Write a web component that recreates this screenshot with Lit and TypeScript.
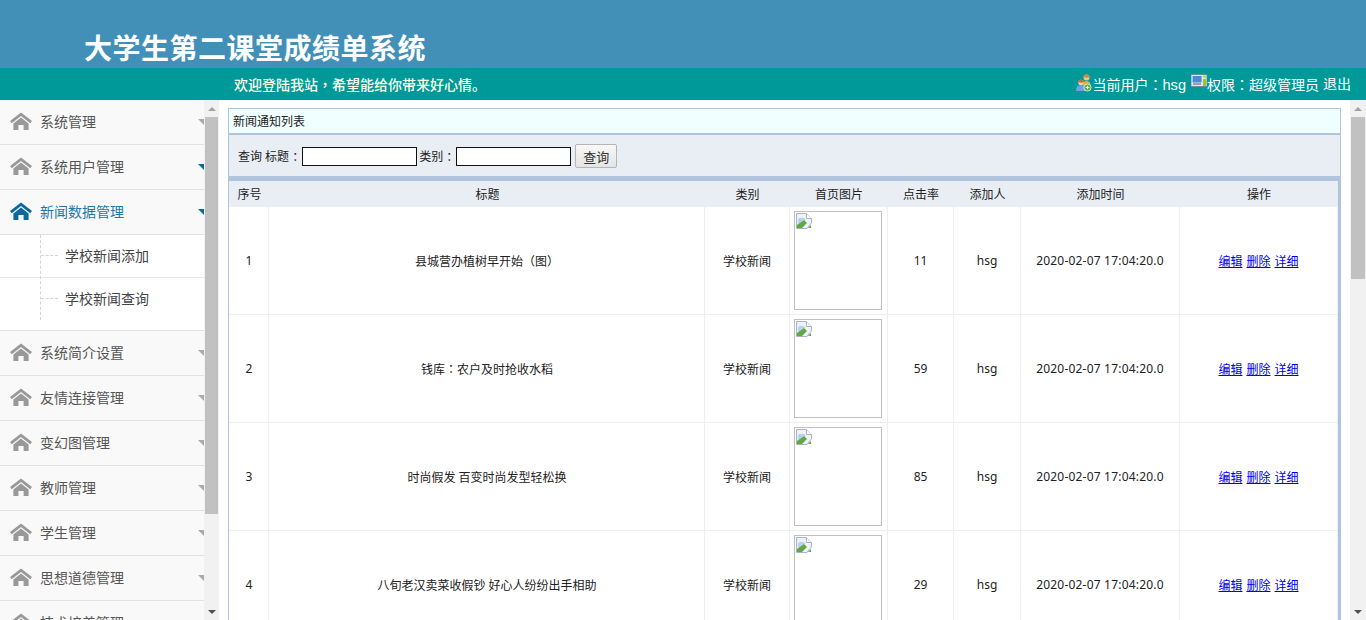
import { LitElement, html, css, svg } from "lit";
import { customElement } from "lit/decorators.js";

const home = svg`<path d="M11 0.5 L22 9 L20.2 11.2 L11 4 L1.8 11.2 L0 9 Z" fill="currentColor"/><path d="M11 5.6 L18.6 11.4 V18 H13.6 V13 H8.4 V18 H3.4 V11.4 Z" fill="currentColor"/>`;

const MENU: { label: string; blue?: boolean; active?: boolean }[] = [
  { label: "系统管理" },
  { label: "系统用户管理", blue: true },
  { label: "新闻数据管理", blue: true, active: true },
  { label: "系统简介设置" },
  { label: "友情连接管理" },
  { label: "变幻图管理" },
  { label: "教师管理" },
  { label: "学生管理" },
  { label: "思想道德管理" },
  { label: "技术培养管理" },
];

const ROWS = [
  ["1", html`县城营办植树早开始（图）`, "11"],
  ["2", html`钱库<span class="tc">：</span>农户及时抢收水稻`, "59"],
  ["3", html`时尚假发 百变时尚发型轻松换`, "85"],
  ["4", html`八旬老汉卖菜收假钞 好心人纷纷出手相助`, "29"],
];

@customElement("app-root")
export class AppRoot extends LitElement {
  static styles = css`
    :host {
      display: block;
      width: 1366px;
      height: 620px;
      overflow: hidden;
      background: #fff;
      font-family: "Noto Sans", "Noto Sans CJK SC", sans-serif;
      font-size: 12px;
      color: #222;
    }
    .top {
      height: 68px;
      background: #428fb8;
      box-sizing: border-box;
      padding: 28px 0 0 84px;
    }
    .brand {
      font-size: 28px;
      line-height: 40px;
      font-weight: 700;
      letter-spacing: 0.5px;
      color: #fff;
    }
    .sub {
      height: 32px;
      background: #009999;
      display: flex;
      align-items: center;
      justify-content: space-between;
      padding: 0 15px 0 234px;
      color: #fff;
      font-size: 14px;
      line-height: 32px;
    }
    .welcome {
      color: #fdfde8;
      font-weight: 500;
      white-space: nowrap;
    }
    .user {
      display: flex;
      align-items: center;
      white-space: nowrap;
    }
    .user svg {
      display: block;
      flex: none;
    }
    .ic1 { margin-top: -2px; }
    .ic2 { margin: -6px 0 0 2px; }
    .tc { font-family: "Noto Sans CJK TC", sans-serif; }
    .latin { font-family: "Liberation Sans", sans-serif; font-size: 14.6px; margin-right: 3px; }
    .gap { margin-left: 4px; }
    .body {
      display: flex;
      height: 520px;
    }
    .side {
      width: 204px;
      flex: none;
      overflow: hidden;
      background: #fff;
    }
    .item {
      height: 45px;
      box-sizing: border-box;
      border-bottom: 1px solid #e2e2e2;
      background: #f9f9f9;
      display: flex;
      align-items: center;
      padding: 0 0 2px 10px;
      font-size: 14px;
      color: #555;
      position: relative;
    }
    .item svg.h {
      color: #999;
      margin-right: 8px;
      flex: none;
    }
    .item.active { color: #1f76a8; }
    .item.active svg.h { color: #0a6a9e; }
    .tri {
      position: absolute;
      right: 0;
      top: 19px;
      width: 0;
      height: 0;
      border-left: 6px solid transparent;
      border-top: 6px solid #aaa;
    }
    .tri.blue { border-top-color: #0c6a9c; }
    .subs {
      position: relative;
      background: #fff;
    }
    .subs::before {
      content: "";
      position: absolute;
      left: 40px;
      top: 0;
      height: 85px;
      border-left: 1px dashed #d4d4d4;
    }
    .subitem {
      height: 43px;
      box-sizing: border-box;
      display: flex;
      align-items: center;
      font-size: 14px;
      color: #444;
      padding: 0 0 2px 41px;
      border-bottom: 1px solid #e8e8e8;
    }
    .subitem.last { height: 53px; padding-bottom: 12px; border-bottom: 1px solid #e2e2e2; }
    .subitem i {
      display: block;
      width: 17px;
      border-top: 1px dashed #d4d4d4;
      margin-right: 7px;
    }
    .bar {
      flex: none;
      background: #f1f1f1;
      display: flex;
      flex-direction: column;
      align-items: stretch;
    }
    .bar.left { width: 15px; }
    .bar.right { width: 16px; }
    .btn {
      height: 17px;
      flex: none;
      display: flex;
      align-items: center;
      justify-content: center;
    }
    .up { width: 0; height: 0; border: 4px solid transparent; border-top: 0; border-bottom: 4px solid #a3a3a3; }
    .dn { width: 0; height: 0; border: 4px solid transparent; border-bottom: 0; border-top: 4px solid #505050; }
    .thumb { background: #c1c1c1; margin: 0 1px; flex: none; }
    .space { flex: 1; }
    .main {
      flex: 1;
      min-width: 0;
      overflow: hidden;
      padding: 8px 9px 0 9px;
    }
    .panel {
      width: 1113px;
      box-sizing: border-box;
      border: 1px solid #b0c4de;
      border-bottom: 0;
    }
    .cap {
      height: 24px;
      line-height: 26px;
      box-sizing: border-box;
      background: #f0ffff;
      padding-left: 4px;
      color: #222;
      overflow: hidden;
    }
    .search {
      border-top: 2px solid #b0c4de;
      border-bottom: 5px solid #b0c4de;
      height: 40px;
      padding: 1px 0 0 9px;
      background: #e9eef5;
      display: flex;
      align-items: center;
      white-space: nowrap;
    }
    .search input {
      width: 115px;
      height: 19px;
      box-sizing: border-box;
      border: 1px solid #111;
      background: #fff;
      padding: 0;
      margin: 0 2px 0 1px;
    }
    .search button {
      width: 42px;
      height: 24px;
      margin-left: 2px;
      border: 1px solid #b5b5b5;
      border-radius: 2px;
      background: linear-gradient(#f8f8f8, #e4e4e4);
      font: inherit;
      font-size: 13px;
      color: #333;
      padding: 0;
    }
    .tablewrap {
      border-right: 2px solid #b0c4de;
    }
    table {
      width: 1109px;
      border-collapse: separate;
      border-spacing: 0;
      table-layout: fixed;
    }
    th {
      height: 26px;
      padding: 0;
      box-sizing: border-box;
      background: #e9eef5;
      font-weight: 400;
      text-align: center;
    }
    td {
      height: 108px;
      box-sizing: border-box;
      padding: 0;
      text-align: center;
      border-right: 1px solid #eeeeee;
      border-bottom: 1px solid #eeeeee;
    }
    th:nth-child(-n + 2),
    td:nth-child(-n + 2) {
      padding-left: 1px;
    }
    .date { letter-spacing: 0.2px; }
    .pic {
      width: 88px;
      height: 99px;
      box-sizing: border-box;
      border: 1px solid #c0c0c0;
      margin: 0 0 0 4px;
      padding: 1px 0 0 1px;
      background: #fff;
    }
    .pic svg { display: block; }
    a {
      color: #0000ee;
      text-decoration: underline;
      margin: 0 2px;
    }
  `;

  private bar(cls: string, h: number) {
    return html`<div class="bar ${cls}">
      <div class="btn"><div class="up"></div></div>
      <div class="thumb" style="height:${h}px"></div>
      <div class="space"></div>
      <div class="btn"><div class="dn"></div></div>
    </div>`;
  }

  private menuItem(m: { label: string; blue?: boolean; active?: boolean }) {
    return html`<div class="item ${m.active ? "active" : ""}">
      <svg class="h" width="22" height="18" viewBox="0 0 22 18">${home}</svg>
      <span>${m.label}</span>
      <span class="tri ${m.blue ? "blue" : ""}"></span>
    </div>`;
  }

  render() {
    return html`
      <div class="top"><div class="brand">大学生第二课堂成绩单系统</div></div>
      <div class="sub">
        <div class="welcome">欢迎登陆我站<span class="tc">，</span>希望能给你带来好心情。</div>
        <div class="user">
          <svg class="ic1" width="16" height="18" viewBox="0 0 16 18">
            <circle cx="10.5" cy="3.5" r="3" fill="#f2c48c"/>
            <path d="M7.5 3.5 a3 3 0 0 1 6 0z" fill="#d08a3a"/>
            <path d="M6.5 12 q0-5 4-5 q4 0 4 5z" fill="#e8a83c"/>
            <circle cx="5" cy="8.5" r="2.8" fill="#f5cfa4"/>
            <path d="M2.2 8.5 a2.8 2.8 0 0 1 5.6 0z" fill="#c0703a"/>
            <path d="M0 17 q0-6 5-6 q5 0 5 6z" fill="#6fa2e4"/>
            <circle cx="11.5" cy="13.5" r="3.6" fill="#5cae4a" stroke="#e8f6e0" stroke-width="0.8"/>
            <path d="M9.7 13.5 h3.6 M11.5 11.7 v3.6" stroke="#fff" stroke-width="1"/>
          </svg>
          <span>当前用户<span class="tc">：</span><span class="latin">hsg</span></span>
          <svg class="ic2" width="16" height="14" viewBox="0 0 16 14">
            <rect x="0" y="0.5" width="16" height="12" fill="#dfe9f5" stroke="#6a7f9c" stroke-width="0.8"/>
            <rect x="1.6" y="2" width="9" height="6.5" fill="#4a8ad2"/>
            <path d="M2 10 h8" stroke="#555" stroke-width="1"/>
            <rect x="12" y="1.4" width="3" height="2.4" fill="#b6dc38"/>
            <rect x="12" y="5" width="3" height="7" fill="#98c828"/>
          </svg>
          <span>权限<span class="tc">：</span>超级管理员</span>
          <span class="gap">退出</span>
        </div>
      </div>
      <div class="body">
        <div class="side">
          ${MENU.slice(0, 3).map((m) => this.menuItem(m))}
          <div class="subs">
            <div class="subitem"><i></i>学校新闻添加</div>
            <div class="subitem last"><i></i>学校新闻查询</div>
          </div>
          ${MENU.slice(3).map((m) => this.menuItem(m))}
        </div>
        ${this.bar("left", 397)}
        <div class="main">
          <div class="panel">
            <div class="cap">新闻通知列表</div>
            <div class="search">
              查询 标题<span class="tc">：</span><input /><span>类别</span><span class="tc">：</span><input /><button>查询</button>
            </div>
            <div class="tablewrap">
              <table>
                <colgroup>
                  <col style="width:40px" /><col style="width:436px" /><col style="width:85px" />
                  <col style="width:98px" /><col style="width:66px" /><col style="width:67px" />
                  <col style="width:159px" /><col style="width:158px" />
                </colgroup>
                <thead>
                  <tr>
                    <th>序号</th><th>标题</th><th>类别</th><th>首页图片</th>
                    <th>点击率</th><th>添加人</th><th>添加时间</th><th>操作</th>
                  </tr>
                </thead>
                <tbody>
                  ${ROWS.map(
                    (r) => html`<tr>
                      <td>${r[0]}</td>
                      <td>${r[1]}</td>
                      <td>学校新闻</td>
                      <td>
                        <div class="pic">
                          <svg width="16" height="16" viewBox="0 0 16 16">
                            <path d="M0.5 0.5 H10.5 L15.5 5.5 V10 L12 14 L11 15.5 H0.5 Z" fill="#eef2f8" stroke="#a9b4c6"/>
                            <path d="M10.5 0.5 V5.5 H15.5" fill="#fff" stroke="#a9b4c6"/>
                            <path d="M2 6 q2-2 5-1 q2 0.5 3 1 l-8 5z" fill="#bcd0ea"/>
                            <path d="M1 15 V12 L8 7 L11 10 L6 15 Z" fill="#5fa844"/>
                            <path d="M12 15 L15 12 V15 Z" fill="#5fa844"/>
                          </svg>
                        </div>
                      </td>
                      <td>${r[2]}</td>
                      <td>hsg</td>
                      <td class="date">2020-02-07 17:04:20.0</td>
                      <td><a>编辑</a><a>删除</a><a>详细</a></td>
                    </tr>`
                  )}
                </tbody>
              </table>
            </div>
          </div>
        </div>
        ${this.bar("right", 162)}
      </div>
    `;
  }
}
